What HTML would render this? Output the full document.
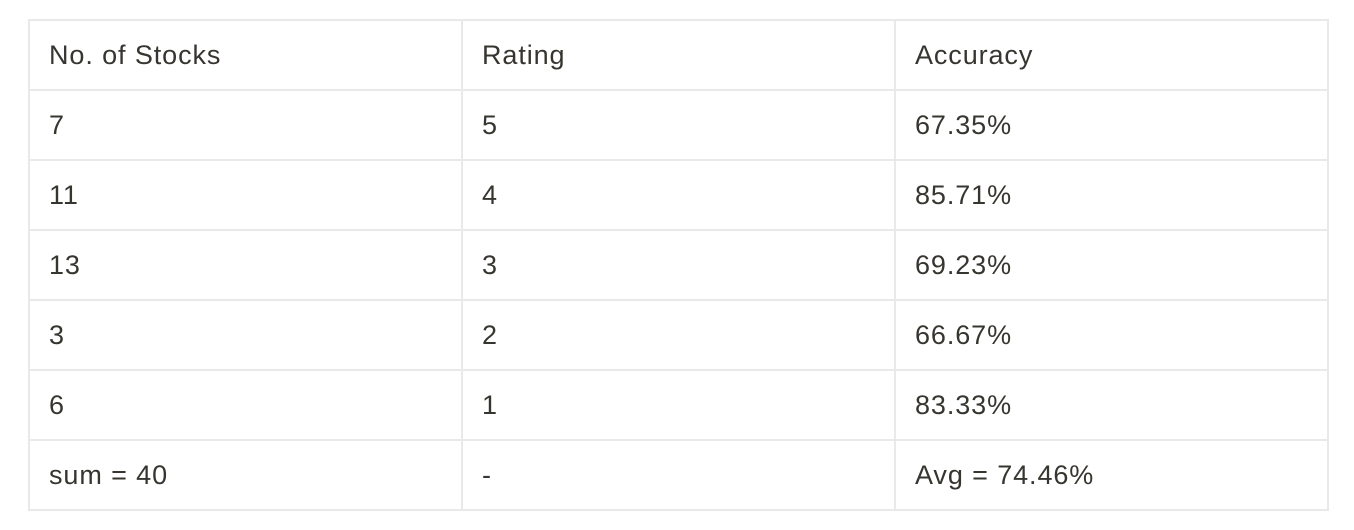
<!DOCTYPE html>
<html><head><style>
html,body{margin:0;padding:0;background:#fff;width:1354px;height:530px;overflow:hidden}
table{position:absolute;left:28px;top:19px;border-collapse:collapse;font-family:"Liberation Sans",sans-serif;font-size:27px;letter-spacing:0.9px;color:#37352f}
td{border:2px solid #e9e9e7;width:433px;height:70px;padding:1px 0 0 19px;vertical-align:middle;box-sizing:border-box}
</style></head><body>
<table>
<tr><td>No. of Stocks</td><td>Rating</td><td>Accuracy</td></tr>
<tr><td>7</td><td>5</td><td>67.35%</td></tr>
<tr><td>11</td><td>4</td><td>85.71%</td></tr>
<tr><td>13</td><td>3</td><td>69.23%</td></tr>
<tr><td>3</td><td>2</td><td>66.67%</td></tr>
<tr><td>6</td><td>1</td><td>83.33%</td></tr>
<tr><td>sum = 40</td><td>-</td><td>Avg = 74.46%</td></tr>
</table>
</body></html>
